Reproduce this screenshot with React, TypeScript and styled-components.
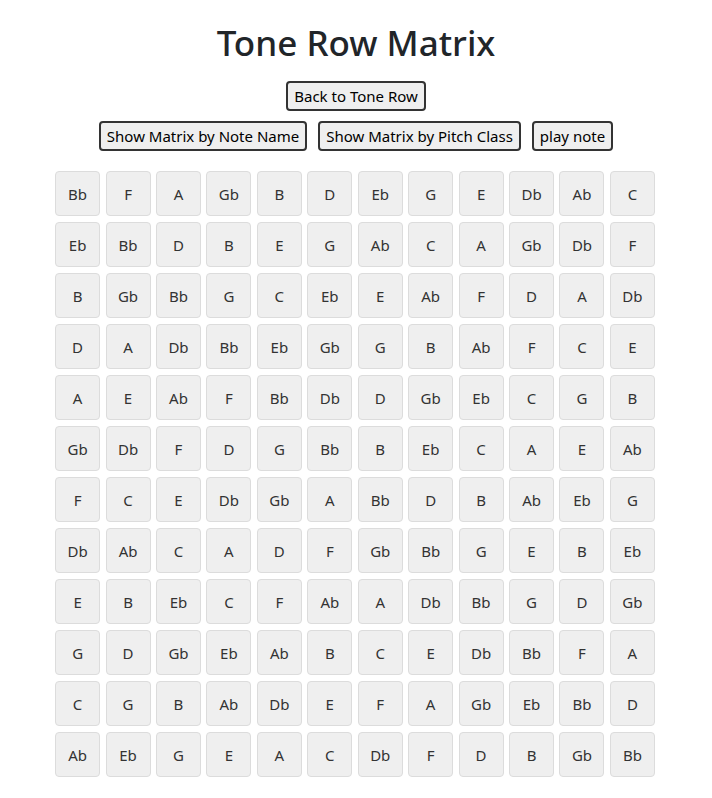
import React from "react";
import styled, { createGlobalStyle } from "styled-components";

const GlobalStyle = createGlobalStyle`
  html, body { margin: 0; padding: 0; background: #fff; }
  body { font-family: "Noto Sans", "Open Sans", sans-serif; color: #212529; }
`;

const Page = styled.div`
  display: flex;
  flex-direction: column;
  align-items: center;
  padding-top: 20px;
`;

const Title = styled.h1`
  margin: 0;
  font-size: 35px;
  font-weight: 500;
  line-height: 46px;
  color: #212529;
`;

const ButtonRow = styled.div<{ $top: number }>`
  display: flex;
  justify-content: center;
  gap: 11px;
  margin-top: ${(p) => p.$top}px;
`;

const Btn = styled.button`
  font-family: inherit;
  font-size: 15px;
  line-height: 22px;
  color: #000;
  background: #efefef;
  border: 2px solid #333;
  border-radius: 4px;
  padding: 2px 6px;
  height: 30px;
  cursor: pointer;
`;

const Grid = styled.div`
  display: grid;
  grid-template-columns: repeat(12, 45px);
  column-gap: 5.45px;
  row-gap: 6px;
  margin: 20px 2px 0 0;
`;

const Cell = styled.div`
  box-sizing: border-box;
  width: 45px;
  height: 45px;
  display: flex;
  align-items: center;
  justify-content: center;
  background: #efefef;
  border: 1px solid #dcdcdc;
  border-radius: 4px;
  font-size: 15px;
  color: #333;
`;

const rows = [
  "Bb F A Gb B D Eb G E Db Ab C",
  "Eb Bb D B E G Ab C A Gb Db F",
  "B Gb Bb G C Eb E Ab F D A Db",
  "D A Db Bb Eb Gb G B Ab F C E",
  "A E Ab F Bb Db D Gb Eb C G B",
  "Gb Db F D G Bb B Eb C A E Ab",
  "F C E Db Gb A Bb D B Ab Eb G",
  "Db Ab C A D F Gb Bb G E B Eb",
  "E B Eb C F Ab A Db Bb G D Gb",
  "G D Gb Eb Ab B C E Db Bb F A",
  "C G B Ab Db E F A Gb Eb Bb D",
  "Ab Eb G E A C Db F D B Gb Bb",
].map((r) => r.split(" "));

export default function App() {
  return (
    <>
      <GlobalStyle />
      <Page>
        <Title>Tone Row Matrix</Title>
        <ButtonRow $top={15}>
          <Btn>Back to Tone Row</Btn>
        </ButtonRow>
        <ButtonRow $top={10}>
          <Btn>Show Matrix by Note Name</Btn>
          <Btn>Show Matrix by Pitch Class</Btn>
          <Btn>play note</Btn>
        </ButtonRow>
        <Grid>
          {rows.flatMap((row, i) =>
            row.map((n, j) => <Cell key={`${i}-${j}`}>{n}</Cell>)
          )}
        </Grid>
      </Page>
    </>
  );
}
